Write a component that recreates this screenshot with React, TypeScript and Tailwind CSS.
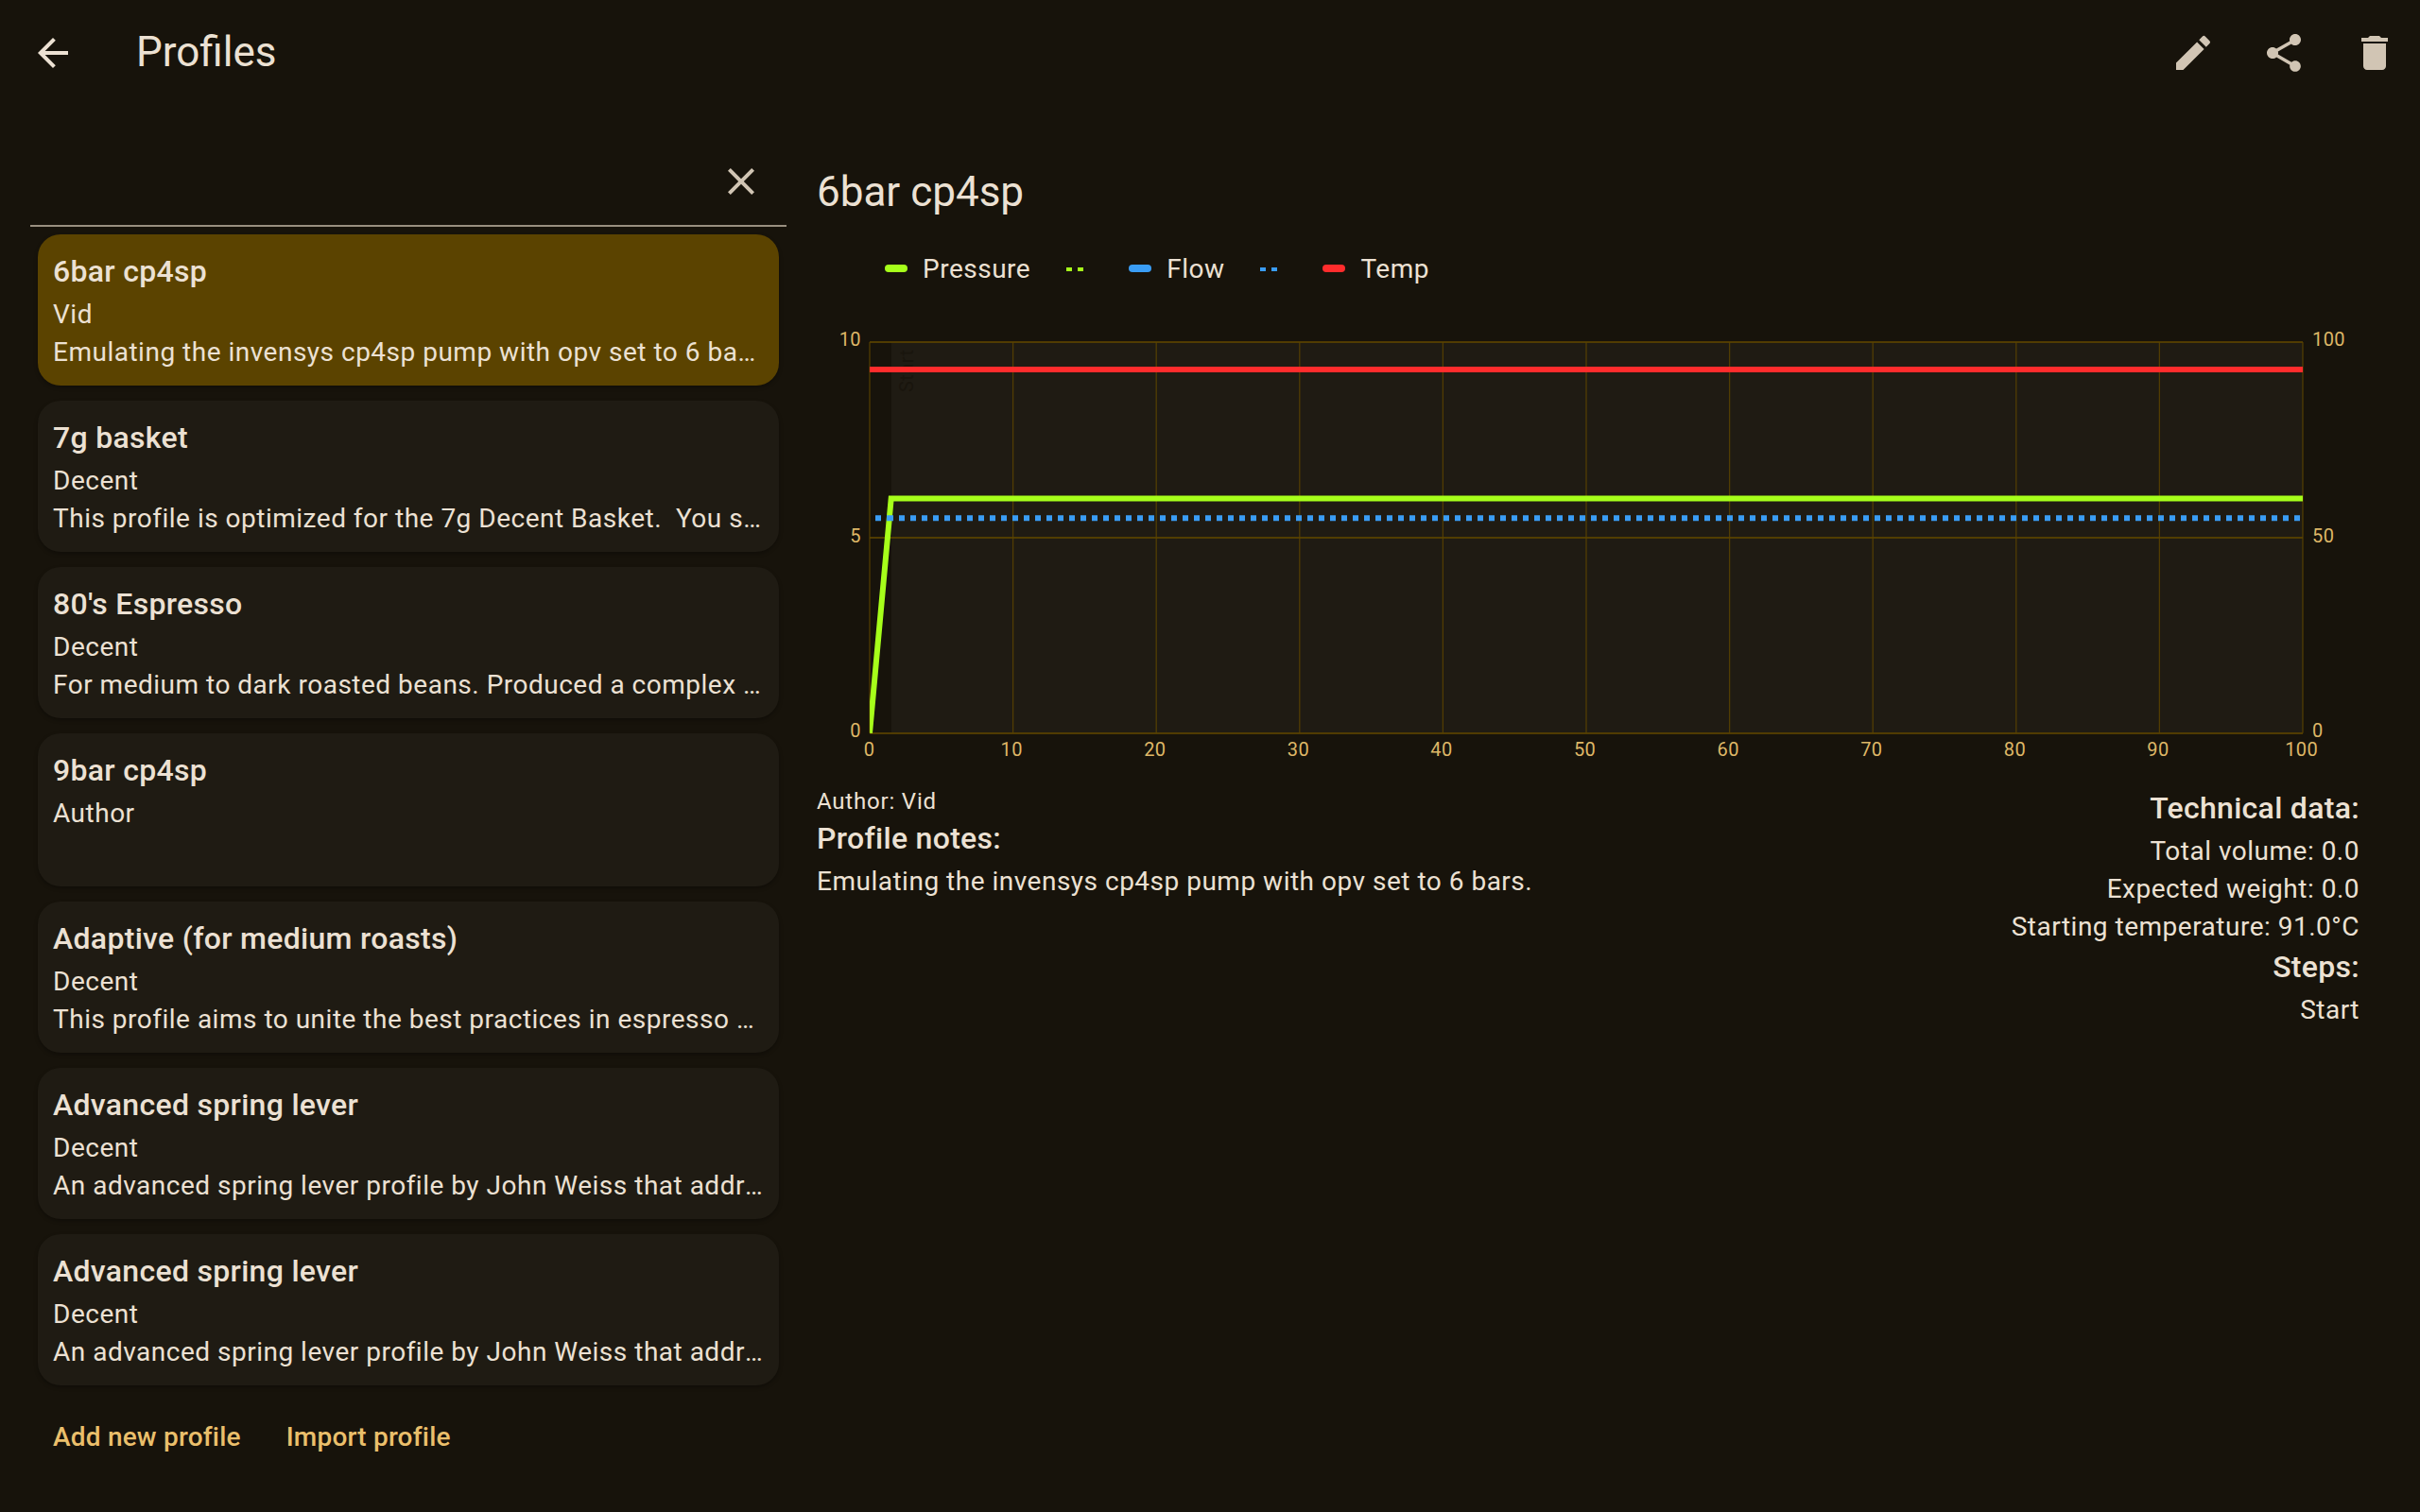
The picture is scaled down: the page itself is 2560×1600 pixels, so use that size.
import React from "react";
import { MdArrowBack, MdClose, MdDelete, MdEdit, MdShare } from "react-icons/md";

type Profile = { title: string; author: string; excerpt: string };

const profiles: Profile[] = [
  {
    title: "6bar cp4sp",
    author: "Vid",
    excerpt: "Emulating the invensys cp4sp pump with opv set to 6 ba",
  },
  {
    title: "7g basket",
    author: "Decent",
    excerpt: "This profile is optimized for the 7g Decent Basket.\u00a0 You s",
  },
  {
    title: "80's Espresso",
    author: "Decent",
    excerpt: "For medium to dark roasted beans. Produced a complex ",
  },
  { title: "9bar cp4sp", author: "Author", excerpt: "" },
  {
    title: "Adaptive (for medium roasts)",
    author: "Decent",
    excerpt: "This profile aims to unite the best practices in espresso ",
  },
  {
    title: "Advanced spring lever",
    author: "Decent",
    excerpt: "An advanced spring lever profile by John Weiss that addr",
  },
  {
    title: "Advanced spring lever",
    author: "Decent",
    excerpt: "An advanced spring lever profile by John Weiss that addr",
  },
];

const heading = "pb-0.5 text-[32px] leading-[46px] font-medium tracking-[0.3px]";
const body = "pt-0.5 text-[28px] leading-[38px] tracking-[0.5px] whitespace-nowrap";

function ProfileCard({ profile, selected }: { profile: Profile; selected: boolean }) {
  return (
    <li
      className={`rounded-3xl p-4 shadow-[0_2px_4px_rgba(0,0,0,0.3)] ${
        selected ? "bg-[#5b4300]" : "bg-[#1f1b13]"
      } ${profile.excerpt ? "h-[160px]" : "h-[162px]"}`}
    >
      <h2 className={heading}>{profile.title}</h2>
      <p className={body}>{profile.author}</p>
      {profile.excerpt && (
        <p className={body}>
          {profile.excerpt}
          <span className="inline-block">…</span>
        </p>
      )}
    </li>
  );
}

function LegendPill({ label, color }: { label: string; color: string }) {
  return (
    <div className="flex items-center gap-4">
      <span className={`h-2 w-6 rounded-[4px] ${color}`} />
      <span className={body}>{label}</span>
    </div>
  );
}

function LegendDots({ color }: { color: string }) {
  return (
    <div className="flex gap-1.5 pt-0.5">
      <span className={`h-1 w-1.5 ${color}`} />
      <span className={`h-1 w-1.5 ${color}`} />
    </div>
  );
}

/* Plot area in chart coordinates; the svg starts at the detail pane's left edge. */
const LEFT = 56;
const RIGHT = 1572;
const TOP = 22;
const BOTTOM = 435.7;
const px = (v: number) => LEFT + (v / 100) * (RIGHT - LEFT);
const py = (v: number) => BOTTOM - (v / 10) * (BOTTOM - TOP);

function Chart() {
  const ticks = [0, 10, 20, 30, 40, 50, 60, 70, 80, 90, 100];
  return (
    <svg width="1632" height="480" viewBox="0 0 1632 480" className="block">
      <rect x="79" y={TOP} width={RIGHT - 79} height={BOTTOM - TOP} fill="#1f1b13" />
      <text
        transform="translate(102 75) rotate(-90)"
        fontSize="20"
        letterSpacing="0.5"
        fill="#19150d"
      >
        Start
      </text>
      <g stroke="#5b4300" strokeOpacity="0.85">
        {ticks.map((t) => (
          <line key={t} x1={px(t)} x2={px(t)} y1={TOP} y2={BOTTOM} strokeWidth="1.3" />
        ))}
        {[0, 5, 10].map((v) => (
          <line key={v} x1={LEFT} x2={RIGHT} y1={Math.round(py(v))} y2={Math.round(py(v))} strokeWidth="1.8" />
        ))}
      </g>
      <clipPath id="plot">
        <rect x={LEFT} y={TOP} width={RIGHT - LEFT} height={BOTTOM - TOP + 0.6} />
      </clipPath>
      <g clipPath="url(#plot)" fill="none" strokeWidth="6">
        <path d={`M${LEFT} ${py(0)}L78.7 ${py(6)}H${RIGHT}`} stroke="#a6ff1a" />
        <path d={`M${LEFT} 51H${RIGHT}`} stroke="#ff2c2c" />
        <path d={`M62 ${py(5.5)}h6m6 0h7`} stroke="#3a9df5" />
        <path d={`M87 ${py(5.5)}H${RIGHT}`} stroke="#3a9df5" strokeDasharray="6 6" />
      </g>
      <g fill="#deb767" fontSize="20" letterSpacing="0.4">
        {[0, 5, 10].map((v) => (
          <text key={v} x="47" y={v === 5 ? 234 : py(v) + 4} textAnchor="end">
            {v}
          </text>
        ))}
        {[0, 50, 100].map((v) => (
          <text key={v} x="1582" y={v === 50 ? 234 : py(v / 10) + 4}>
            {v}
          </text>
        ))}
        {ticks.map((t) => (
          <text key={t} x={px(t) - (t === 0 ? 0.4 : 1.4)} y="460" textAnchor="middle">
            {t}
          </text>
        ))}
      </g>
    </svg>
  );
}

export default function App() {
  return (
    <div className="flex h-[1600px] w-[2560px] flex-col overflow-hidden bg-[#17130b] font-['Roboto',sans-serif] text-[#ece1d3]">
      <header className="flex h-28 items-center pr-6 pl-8">
        <MdArrowBack size={48} />
        <h1 className="ml-16 flex-1 pb-0.5 text-[44px] leading-[54px]">Profiles</h1>
        <div className="flex gap-12 text-[#d1c5b4]">
          <MdEdit size={48} />
          <MdShare size={48} />
          <MdDelete size={48} />
        </div>
      </header>

      <div className="flex flex-1">
        <aside className="ml-8 w-[800px] pt-8">
          <div className="flex h-24 items-center justify-end border-b-2 border-[#998f80] pt-0.5 pr-6 text-[#d1c5b4]">
            <MdClose size={48} />
          </div>
          <ul className="flex flex-col gap-4 px-2 pt-2">
            {profiles.map((profile, i) => (
              <ProfileCard key={i} profile={profile} selected={i === 0} />
            ))}
          </ul>
          <div className="mt-[35px] flex gap-12 px-6 text-[28px] leading-10 font-medium tracking-[0.2px] text-[#eabf6b]">
            <button>Add new profile</button>
            <button>Import profile</button>
          </div>
        </aside>

        <main className="ml-8 flex w-[1632px] flex-col pt-16">
          <h2 className="h-14 text-[44px] leading-[54px]">6bar cp4sp</h2>
          <div className="mt-8 ml-[72px] flex h-10 items-center">
            <LegendPill label="Pressure" color="bg-[#a6ff1a]" />
            <div className="ml-[38px]">
              <LegendDots color="bg-[#a6ff1a]" />
            </div>
            <div className="ml-12">
              <LegendPill label="Flow" color="bg-[#3a9df5]" />
            </div>
            <div className="ml-[38px]">
              <LegendDots color="bg-[#3a9df5]" />
            </div>
            <div className="ml-12">
              <LegendPill label="Temp" color="bg-[#ff2c2c]" />
            </div>
          </div>
          <div className="mt-9 h-[492px]">
            <Chart />
          </div>
          <div className="flex justify-between">
            <section>
              <p className="text-2xl leading-8 tracking-[0.8px]">Author: Vid</p>
              <h3 className={heading}>Profile notes:</h3>
              <p className={body}>Emulating the invensys cp4sp pump with opv set to 6 bars.</p>
            </section>
            <section className="text-right">
              <h3 className={heading}>Technical data:</h3>
              <p className={body}>Total volume: 0.0</p>
              <p className={body}>Expected weight: 0.0</p>
              <p className={body}>Starting temperature: 91.0°C</p>
              <h3 className={heading}>Steps:</h3>
              <p className={body}>Start</p>
            </section>
          </div>
        </main>
      </div>
    </div>
  );
}
